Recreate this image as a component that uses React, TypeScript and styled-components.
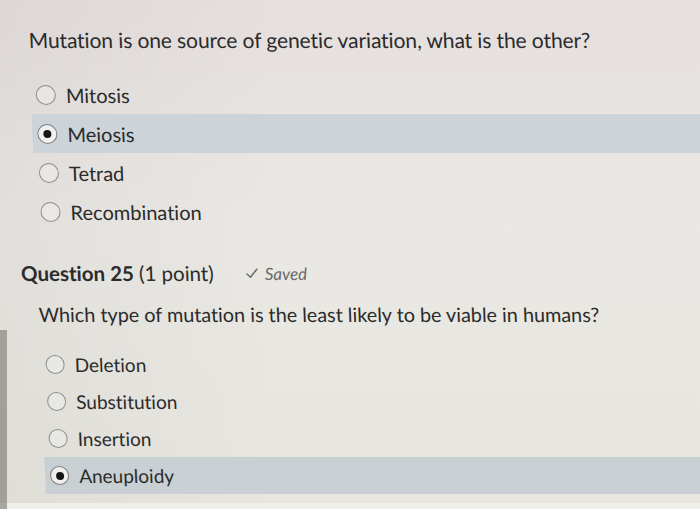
import React from "react";
import styled, {createGlobalStyle} from "styled-components";

const GlobalStyle = createGlobalStyle`
  html, body {
    margin: 0;
    padding: 0;
  }
  body {
    font-family: Lato, "Open Sans", "Liberation Sans", sans-serif;
    font-variant-ligatures: none;
    color: #2b2b2b;
  }
`;

const Page = styled.div`
  width: 700px;
  height: 509px;
  overflow: hidden;
  position: relative;
  background:
    linear-gradient(to right, rgba(120, 118, 110, 0.6) 0 7px, transparent 7px) 0 330px / 100% 180px no-repeat,
    linear-gradient(to bottom, transparent 0 503px, #efeee9 503px),
    linear-gradient(to right, rgba(0, 0, 0, 0.035), rgba(0, 0, 0, 0) 40%),
    linear-gradient(to bottom, #e5dfde 0%, #eae8e4 45%, #e6e5de 100%);
`;

/* the photo was taken a bit from the side: lines drift right as they go down */
const Sheet = styled.div`
  width: 740px;
  transform-origin: 0 0;
  transform: skewX(2.3deg);
  display: flex;
  flex-direction: column;
  padding-top: 25px;
`;

const Title = styled.div`
  padding-left: 27px;
  font-size: 21px;
  letter-spacing: -0.1px;
  line-height: 30px;
  white-space: nowrap;
`;

const OptionList = styled.div<{ $gap: number }>`
  display: flex;
  flex-direction: column;
  margin-top: ${p => p.$gap}px;
`;

const OptionRow = styled.div<{ $selected?: boolean; $height: number; $left: number; $tint: string }>`
  display: flex;
  align-items: center;
  gap: 10px;
  height: ${p => p.$height}px;
  margin-left: ${p => p.$left}px;
  padding-left: 5px;
  background: ${p => (p.$selected ? p.$tint : "transparent")};
`;

const Radio = styled.span<{ $size: number; $selected?: boolean }>`
  box-sizing: border-box;
  flex: none;
  width: ${p => p.$size}px;
  height: ${p => p.$size}px;
  border-radius: 50%;
  border: 1.5px solid ${p => (p.$selected ? "#7d7d7d" : "#8e8e8c")};
  background: ${p => (p.$selected ? "#f1f0ee" : "rgba(255, 255, 255, 0.25)")};
  display: flex;
  align-items: center;
  justify-content: center;

  &::after {
    content: "";
    display: ${p => (p.$selected ? "block" : "none")};
    width: 8px;
    height: 8px;
    border-radius: 50%;
    background: #161616;
  }
`;

const OptionLabel = styled.span<{ $size: number }>`
  font-size: ${p => p.$size}px;
  white-space: nowrap;
`;

const QuestionHeader = styled.div`
  display: flex;
  align-items: center;
  margin-top: 27px;
  padding-left: 10px;
  height: 30px;
  font-size: 20.5px;
  white-space: nowrap;
`;

const QNumber = styled.span`
  font-weight: 700;
`;

const Points = styled.span`
  margin-left: 5px;
`;

const SavedTag = styled.span`
  display: flex;
  align-items: center;
  gap: 7px;
  margin-left: 32px;
  font-size: 17px;
  font-style: italic;
  color: #6a6a69;
`;

const Prompt = styled.div`
  margin-top: 11px;
  padding-left: 26px;
  font-size: 19.8px;
  line-height: 30px;
  white-space: nowrap;
`;

interface Choice {
    label: string;
    selected?: boolean;
}

const first: Choice[] = [
    {label: "Mitosis"},
    {label: "Meiosis", selected: true},
    {label: "Tetrad"},
    {label: "Recombination"},
];

const second: Choice[] = [
    {label: "Deletion"},
    {label: "Substitution"},
    {label: "Insertion"},
    {label: "Aneuploidy", selected: true},
];

function Options(props: {
    choices: Choice[];
    gap: number;
    rowHeight: number;
    left: number;
    radio: number;
    font: number;
    tint: string;
}) {
    const {choices, gap, rowHeight, left, radio, font, tint} = props;
    return (
        <OptionList $gap={gap}>
            {choices.map(c => (
                <OptionRow key={c.label} $selected={c.selected} $height={rowHeight} $left={left} $tint={tint}>
                    <Radio $size={radio} $selected={c.selected}/>
                    <OptionLabel $size={font}>{c.label}</OptionLabel>
                </OptionRow>
            ))}
        </OptionList>
    );
}

export default function App() {
    return (
        <Page>
            <GlobalStyle/>
            <Sheet>
                <Title>Mutation is one source of genetic variation, what is the other?</Title>
                <Options choices={first} gap={20} rowHeight={39} left={27} radio={20} font={20} tint="#ccd3d9"/>

                <QuestionHeader>
                    <QNumber>Question 25</QNumber>
                    <Points>(1 point)</Points>
                    <SavedTag>
                        <svg width="12" height="11" viewBox="0 0 12 11" fill="none">
                            <path d="M1 6 L4.3 9.2 L11 1.2" stroke="#6e6e6e" strokeWidth="1.6" strokeLinecap="round"
                                  strokeLinejoin="round"/>
                        </svg>
                        Saved
                    </SavedTag>
                </QuestionHeader>
                <Prompt>Which type of mutation is the least likely to be viable in humans?</Prompt>
                <Options choices={second} gap={17} rowHeight={37} left={26} radio={19} font={19} tint="#c8d0d3"/>
            </Sheet>
        </Page>
    );
}
